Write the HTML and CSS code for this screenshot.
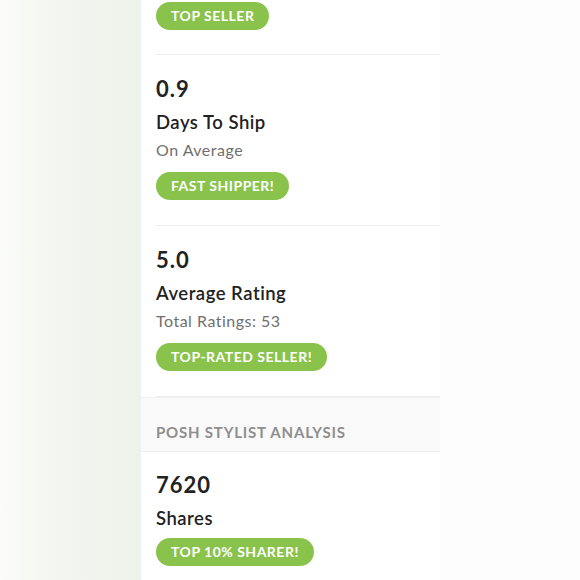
FILE: index.html
```html
<!DOCTYPE html>
<html lang="en">
<head>
<meta charset="utf-8">
<title>Seller Stats</title>
<link rel="stylesheet" href="styles.css">
</head>
<body>
<div class="page">
  <div class="side"></div>
  <main class="panel">
    <div class="stat stat-top">
      <span class="badge">Top Seller</span>
    </div>
    <section class="stat">
      <div class="stat-value">0.9</div>
      <div class="stat-title">Days To Ship</div>
      <div class="stat-sub">On Average</div>
      <span class="badge">Fast Shipper!</span>
    </section>
    <section class="stat">
      <div class="stat-value">5.0</div>
      <div class="stat-title">Average Rating</div>
      <div class="stat-sub">Total Ratings: 53</div>
      <span class="badge">Top-Rated Seller!</span>
    </section>
    <div class="section-head">Posh Stylist Analysis</div>
    <section class="stat stat-last">
      <div class="stat-value">7620</div>
      <div class="stat-title">Shares</div>
      <span class="badge">Top 10% Sharer!</span>
    </section>
  </main>
  <div class="rest"></div>
</div>
</body>
</html>
```
FILE: styles.css
```css
html, body {
  margin: 0;
  padding: 0;
  height: 100%;
}
body {
  font-family: Lato, "Liberation Sans", sans-serif;
  color: #222222;
  background: #fdfdfd;
  overflow: hidden;
}
.page {
  display: flex;
  height: 580px;
}
.side {
  width: 141px;
  flex: none;
  background: linear-gradient(to right, #fbfcfa 0%, #f3f6f0 40%, #edf2ea 100%);
}
.panel {
  width: 299px;
  flex: none;
  background: #ffffff;
  display: flex;
  flex-direction: column;
}
.rest {
  flex: 1;
  background: #fdfdfd;
}
.stat {
  margin-left: 15px;
  padding: 21px 0 25px;
  border-bottom: 1px solid #eeeeee;
  display: flex;
  flex-direction: column;
  align-items: flex-start;
}
.stat-top {
  padding: 2px 0 24px;
}
.stat-last {
  border-bottom: none;
  padding-top: 20px;
}
.stat-value {
  font-size: 22px;
  line-height: 26px;
  font-weight: 700;
  letter-spacing: 1px;
  color: #222222;
}
.stat-title {
  margin-top: 8px;
  font-size: 18.5px;
  line-height: 24px;
  font-weight: 600;
  letter-spacing: 0.5px;
  color: #222222;
}
.stat-sub {
  margin-top: 5px;
  font-size: 16px;
  line-height: 22px;
  letter-spacing: 0.5px;
  color: #707070;
}
.stat .badge {
  margin-top: 11px;
}
.stat-top .badge {
  margin-top: 0;
}
.stat-last .badge {
  margin-top: 8px;
}
.badge {
  display: inline-block;
  height: 28px;
  line-height: 28px;
  padding: 0 15px;
  border-radius: 14px;
  background: #89c34b;
  color: #ffffff;
  font-size: 14px;
  font-weight: 700;
  letter-spacing: 0.5px;
  text-transform: uppercase;
  white-space: nowrap;
}
.section-head {
  background: #f9f9f9;
  border-top: 1px solid #f0f0f0;
  border-bottom: 1px solid #eeeeee;
  padding: 24px 15px 9px;
  font-size: 15px;
  line-height: 20px;
  font-weight: 700;
  letter-spacing: 0.8px;
  color: #8e8e8e;
  text-transform: uppercase;
}
```
